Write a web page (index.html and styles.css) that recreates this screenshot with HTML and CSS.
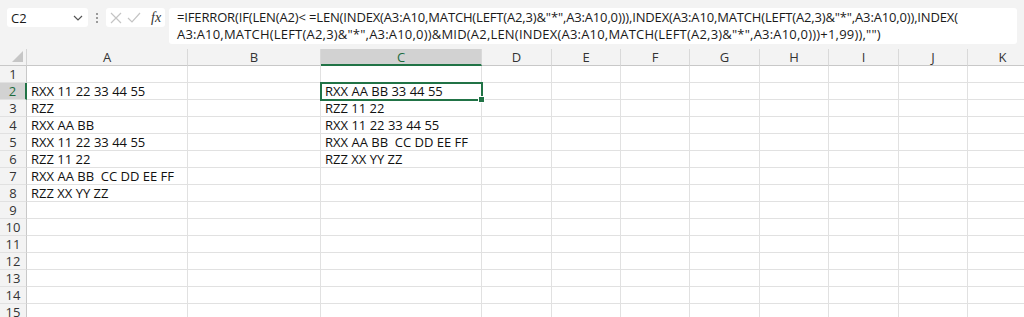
FILE: index.html
```html
<!DOCTYPE html>
<html>
<head>
<meta charset="utf-8">
<link rel="stylesheet" href="styles.css">
</head>
<body>
<div class="toolbar">
  <div class="namebox">
    <span>C2</span>
    <svg class="chev" width="10" height="6" viewBox="0 0 10 6"><path d="M1 1 L5 5 L9 1" fill="none" stroke="#555" stroke-width="1.2"/></svg>
  </div>
  <div class="dots"><i></i><i></i><i></i></div>
  <div class="fxbox">
    <svg class="ico" width="14" height="14" viewBox="0 0 14 14"><path d="M2 2 L12 12 M12 2 L2 12" stroke="#c4c4c4" stroke-width="1.2" fill="none"/></svg>
    <svg class="ico" width="14" height="14" viewBox="0 0 14 14"><path d="M1 7 L5 11 L13 2" stroke="#c4c4c4" stroke-width="1.2" fill="none"/></svg>
    <span class="fx">fx</span>
  </div>
  <div class="formula"><span class="l1">=IFERROR(IF(LEN(A2)&lt; =LEN(INDEX(A3:A10,MATCH(LEFT(A2,3)&amp;"*",A3:A10,0))),INDEX(A3:A10,MATCH(LEFT(A2,3)&amp;"*",A3:A10,0)),INDEX(</span><br><span class="l2">A3:A10,MATCH(LEFT(A2,3)&amp;"*",A3:A10,0))&amp;MID(A2,LEN(INDEX(A3:A10,MATCH(LEFT(A2,3)&amp;"*",A3:A10,0)))+1,99)),"")</span></div>
</div>
<div class="sheet" id="sheet"></div>
<script src="app.js"></script>
</body>
</html>
```
FILE: app.js
```js
const cols = ['A','B','C','D','E','F','G','H','I','J','K'];
const data = {
  'A2':'RXX 11 22 33 44 55','A3':'RZZ','A4':'RXX AA BB','A5':'RXX 11 22 33 44 55',
  'A6':'RZZ 11 22','A7':'RXX AA BB&nbsp; CC DD EE FF','A8':'RZZ XX YY ZZ',
  'C2':'RXX AA BB 33 44 55','C3':'RZZ 11 22','C4':'RXX 11 22 33 44 55',
  'C5':'RXX AA BB&nbsp; CC DD EE FF','C6':'RZZ XX YY ZZ'
};
const s = document.getElementById('sheet');
let h = '<div class="corner"><span class="tri"></span></div>';
cols.forEach(c => { h += '<div class="colhead' + (c==='C'?' sel':'') + '">' + c + '</div>'; });
for (let r = 1; r <= 15; r++) {
  h += '<div class="rowhead' + (r===2?' sel':'') + '">' + r + '</div>';
  cols.forEach(c => {
    const k = c + r;
    h += '<div class="cell' + (k==='C2'?' active':'') + '">' + (data[k]||'') + '</div>';
  });
}
s.innerHTML = h;
```
FILE: styles.css
```css
* { box-sizing: border-box; }
html, body { height: 317px; }
body { margin: 0; font-family: "Open Sans", "Noto Sans", sans-serif; color: #1a1a1a; background: #fff; overflow: hidden; }
.toolbar { display: flex; align-items: flex-start; background: #f3f3f3; padding: 8px 0 5px 7px; height: 49px; }
.namebox { width: 81px; height: 19px; background: #fff; border-radius: 3px; display: flex; align-items: center; justify-content: space-between; padding: 0 5px 0 4px; font-size: 13px; }
.chev { margin-top: 1px; }
.dots { width: 18px; height: 19px; display: flex; flex-direction: column; align-items: center; justify-content: center; gap: 2px; }
.dots i { width: 2px; height: 2px; background: #9a9a9a; display: block; }
.fxbox { width: 59px; height: 19px; background: #fff; border-radius: 3px; display: flex; align-items: center; padding: 0 0 0 3px; gap: 4px; }
.fx { font-family: "Liberation Serif", serif; font-style: italic; font-size: 14px; color: #333; margin-left: 6px; }
.formula { margin-left: 4px; width: 848px; height: 36px; background: #fff; border-radius: 3px; padding: 1px 0 0 8px; font-size: 13px; line-height: 17px; white-space: nowrap; overflow: hidden; }
.l1 { letter-spacing: -0.15px; }
.l2 { letter-spacing: 0.2px; }
.sheet { display: grid; grid-template-columns: 27px 161px 133px 161px 70px 69px 69px 70px 69px 70px 69px 70px; grid-auto-rows: 17px; font-size: 13px; width: 1038px; height: 268px; overflow: hidden; }
.corner { background: #f3f3f3; border-right: 1px solid #d4d4d4; border-bottom: 1px solid #c8c8c8; position: relative; }
.tri { position: absolute; right: 3px; bottom: 3px; width: 0; height: 0; border-left: 11px solid transparent; border-bottom: 11px solid #c6c6c6; }
.colhead { background: #f3f3f3; border-right: 1px solid #d9d9d9; border-bottom: 1px solid #c8c8c8; text-align: center; line-height: 16px; color: #333; }
.colhead.sel { background: #d2d2d2; border-bottom: 2px solid #217346; color: #1d6b3e; }
.rowhead { background: #f3f3f3; border-right: 1px solid #c8c8c8; border-bottom: 1px solid #e1e1e1; text-align: center; line-height: 16px; color: #333; }
.rowhead.sel { background: #d2d2d2; border-right: 2px solid #217346; color: #1d6b3e; }
.cell { border-right: 1px solid #e1e1e1; border-bottom: 1px solid #e1e1e1; padding-left: 4px; line-height: 16px; white-space: nowrap; color: #111; }
.cell.active { outline: 2px solid #217346; outline-offset: -1px; position: relative; z-index: 1; }
.cell.active::after { content: ""; position: absolute; right: -4px; bottom: -4px; width: 5px; height: 5px; background: #217346; border: 1px solid #fff; }
```
